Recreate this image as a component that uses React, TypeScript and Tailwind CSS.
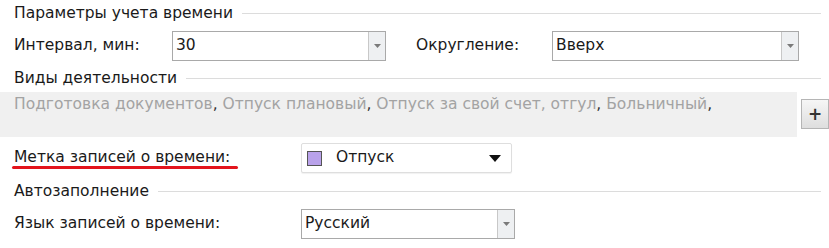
import React from "react";

const font = { fontFamily: '"DejaVu Sans", "Noto Sans", sans-serif' };

function SmallArrow() {
  return (
    <svg width="7" height="4" viewBox="0 0 7 4">
      <path d="M0 0 L7 0 L3.5 4 Z" fill="#7a7a7a" />
    </svg>
  );
}

function Combo({ value, width }: { value: string; width: string }) {
  return (
    <div className={`flex h-[30px] ${width} border border-[#a9a9a9] bg-white`}>
      <div className="flex flex-1 items-center pl-[3px] text-[15.5px] text-[#1a1a1a]">{value}</div>
      <div className="flex w-[17px] items-center justify-center border-l border-[#c8c8c8] bg-[#eef0f2]">
        <SmallArrow />
      </div>
    </div>
  );
}

function Header({ text }: { text: string }) {
  return (
    <div className="flex items-center pl-[14px]">
      <span className="text-[15.5px] text-[#1a1a1a] whitespace-nowrap">{text}</span>
      <div className="ml-[9px] mr-[8px] h-0 flex-1 border-t border-[#dcdcdc]" />
    </div>
  );
}

export default function App() {
  return (
    <div className="relative h-[248px] w-[829px] overflow-hidden bg-white" style={font}>
      <div className="flex flex-col">
        <div className="h-[26px] pt-[2px]">
          <Header text="Параметры учета времени" />
        </div>
        <div className="flex h-[37px] items-center pl-[14px] pt-[2px]">
          <span className="w-[158px] text-[15.5px] text-[#1a1a1a]">Интервал, мин:</span>
          <Combo value="30" width="w-[214px]" />
          <span className="ml-[30px] w-[136px] text-[15.5px] text-[#1a1a1a]">Округление:</span>
          <Combo value="Вверх" width="w-[247px]" />
        </div>
        <div className="h-[28px] pt-[4px]">
          <Header text="Виды деятельности" />
        </div>
        <div className="flex h-[46px] items-start pt-[1px]">
          <div className="h-[45px] w-[797px] bg-[#f0f0f0] pl-[14px] pt-[1px] text-[15.5px] text-[#a3a3a3]">
            Подготовка документов<span className="text-[#333]">,</span> Отпуск плановый<span className="text-[#333]">,</span> Отпуск за свой счет, отгул<span className="text-[#333]">,</span> Больничный<span className="text-[#333]">,</span>
          </div>
          <div className="ml-[4px] mt-[7px] flex h-[30px] w-[28px] items-center justify-center border border-[#b5b5b5] bg-gradient-to-b from-[#f6f6f6] to-[#dedede] text-[17px] font-bold leading-none text-[#333]">
            +
          </div>
        </div>
        <div className="flex h-[38px] items-center pl-[14px] pt-[4px]">
          <span className="relative w-[287px] text-[15.5px] text-[#1a1a1a]">
            Метка записей о времени:
            <span className="absolute left-[-2px] top-[20px] h-[3px] w-[226px] rounded-full bg-[#e3141c]" />
          </span>
          <div className="flex h-[30px] w-[211px] items-center rounded-[2px] border border-[#dedede] bg-white pl-[5px] shadow-[0_1px_1px_rgba(0,0,0,0.06)]">
            <div className="h-[15px] w-[15px] border border-[#555] bg-[#b9a2ea]" />
            <span className="ml-[14px] flex-1 text-[15.5px] text-[#1a1a1a]">Отпуск</span>
            <svg width="12" height="7" viewBox="0 0 12 7" className="mr-[10px]">
              <path d="M0 0 L12 0 L6 7 Z" fill="#111" />
            </svg>
          </div>
        </div>
        <div className="h-[30px] pt-[5px]">
          <Header text="Автозаполнение" />
        </div>
        <div className="flex h-[37px] items-center pl-[14px]">
          <span className="w-[287px] text-[15.5px] text-[#1a1a1a]">Язык записей о времени:</span>
          <Combo value="Русский" width="w-[214px]" />
        </div>
      </div>
    </div>
  );
}
